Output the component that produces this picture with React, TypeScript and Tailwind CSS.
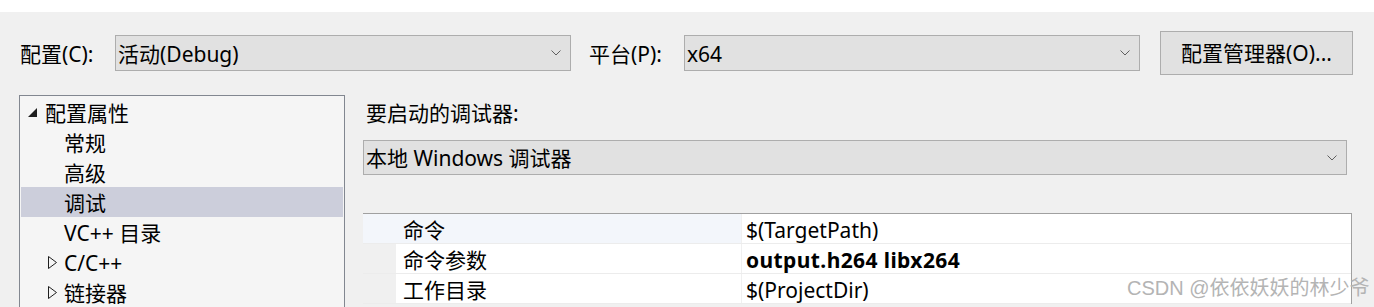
const ui = "font-['Noto_Sans','Noto_Sans_CJK_SC',sans-serif]";

function Chevron() {
  return (
    <svg width="10" height="6" viewBox="0 0 10 6" className="shrink-0">
      <path d="M0.5 0.5 L5 5 L9.5 0.5" fill="none" stroke="#5f5f5f" strokeWidth="1" />
    </svg>
  );
}

function Combo({ text, width, height }: { text: string; width: string; height: string }) {
  return (
    <div className={`flex items-center justify-between ${width} ${height} bg-[#e1e1e1] border border-[#adadad] pl-[2px] pr-[9px]`}>
      <span className="leading-[30px] pt-px">{text}</span>
      <Chevron />
    </div>
  );
}

function Expanded() {
  return (
    <svg width="9" height="9" viewBox="0 0 9 9" className="shrink-0">
      <polygon points="9,0 9,9 0,9" fill="#1e1e1e" />
    </svg>
  );
}

function Collapsed() {
  return (
    <svg width="9" height="13" viewBox="0 0 9 13" className="shrink-0">
      <polygon points="0.5,0.5 8.5,6.5 0.5,12.5" fill="none" stroke="#1e1e1e" strokeWidth="1" />
    </svg>
  );
}

const treeItems = [
  { label: "常规" },
  { label: "高级" },
  { label: "调试", selected: true },
  { label: "VC++ 目录" },
  { label: "C/C++", collapsed: true },
  { label: "链接器", collapsed: true },
];

const props = [
  { name: "命令", value: "$(TargetPath)", active: true },
  { name: "命令参数", value: "output.h264 libx264", bold: true },
  { name: "工作目录", value: "$(ProjectDir)" },
];

export default function App() {
  return (
    <div className={`relative w-[1374px] h-[307px] overflow-hidden bg-[#f0f0f0] text-[21px] text-black ${ui}`}>
      <div className="h-[12px] bg-white" />

      {/* configuration / platform row */}
      <div className="flex items-center h-[44px] mt-[19px] pl-[20px]">
        <span className="w-[95px] leading-[30px] pt-px">配置(C):</span>
        <Combo text="活动(Debug)" width="w-[456px]" height="h-[36px]" />
        <span className="ml-[18px] w-[95px] leading-[30px] pt-px">平台(P):</span>
        <Combo text="x64" width="w-[456px]" height="h-[36px]" />
        <button className="ml-[20px] w-[193px] h-[44px] bg-[#e1e1e1] border border-[#adadad] leading-[30px]">
          配置管理器(O)...
        </button>
      </div>

      <div className="flex mt-[20px]">
        {/* property tree */}
        <div className="ml-[19px] w-[326px] h-[260px] border border-[#828790] bg-[#f5f5f5] p-px">
          <div className="flex items-center h-[30px] pl-[7px]">
            <Expanded />
            <span className="ml-[8px] leading-[30px] pt-px">配置属性</span>
          </div>
          {treeItems.map((item) => (
            <div
              key={item.label}
              className={`flex items-center h-[30px] ${item.selected ? "bg-[#cccedb]" : ""} ${item.collapsed ? "pl-[27px]" : "pl-[43px]"}`}
            >
              {item.collapsed && <Collapsed />}
              <span className={`leading-[30px] pt-px ${item.collapsed ? "ml-[7px]" : ""}`}>{item.label}</span>
            </div>
          ))}
        </div>

        {/* debugger page */}
        <div className="ml-[18px] w-[989px] flex flex-col">
          <div className="pt-[3px] pl-[3px] h-[32px] leading-[30px]">要启动的调试器:</div>
          <div className="mt-[13px]">
            <Combo text="本地 Windows 调试器" width="w-[984px]" height="h-[35px]" />
          </div>
          <div className="mt-[38px] border-t border-r border-[#a0a0a0] bg-white">
            {props.map((p) => (
              <div key={p.name} className="flex h-[30px] border-b border-[#ececec]">
                <div className={`w-[33px] ${p.active ? "bg-[#f3f6fb]" : "bg-[#f0f0f0]"}`} />
                <div className={`w-[346px] pl-[7px] pt-px leading-[30px] border-r border-[#f0f0f0] ${p.active ? "bg-[#f3f6fb]" : ""}`}>
                  {p.name}
                </div>
                <div className={`flex-1 pl-[4px] pt-px leading-[30px] ${p.bold ? "font-bold tracking-[0.4px]" : ""}`}>{p.value}</div>
              </div>
            ))}
          </div>
        </div>
      </div>

      <div className="absolute left-[1127px] top-[275px] text-[20px] leading-[26px] text-[#b4b4b4] font-['Liberation_Sans','Noto_Sans_CJK_SC',sans-serif]">
        CSDN @依依妖妖的林少爷
      </div>
    </div>
  );
}
